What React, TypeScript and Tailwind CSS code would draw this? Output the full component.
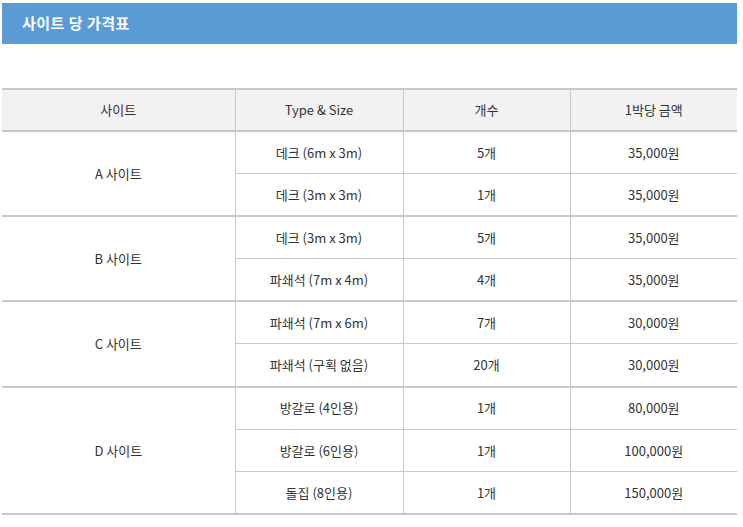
import React from "react";

const groups = [
  { site: "A 사이트", rows: [["데크 (6m x 3m)", "5개", "35,000원"], ["데크 (3m x 3m)", "1개", "35,000원"]] },
  { site: "B 사이트", rows: [["데크 (3m x 3m)", "5개", "35,000원"], ["파쇄석 (7m x 4m)", "4개", "35,000원"]] },
  { site: "C 사이트", rows: [["파쇄석 (7m x 6m)", "7개", "30,000원"], ["파쇄석 (구획 없음)", "20개", "30,000원"]] },
  {
    site: "D 사이트",
    rows: [["방갈로 (4인용)", "1개", "80,000원"], ["방갈로 (6인용)", "1개", "100,000원"], ["돌집 (8인용)", "1개", "150,000원"]],
  },
];

export default function App() {
  return (
    <div
      className="w-[743px] h-[527px] bg-white px-[2px] pt-[3px] text-[#333]"
      style={{ fontFamily: '"Noto Sans CJK KR", "Noto Sans", sans-serif' }}
    >
      <div className="w-[735px] h-[41px] bg-[#5b9bd5] flex items-center pl-[20px]">
        <span className="text-white font-bold text-[15px] tracking-[0.5px]">사이트 당 가격표</span>
      </div>
      <table className="mt-[44px] w-[735px] border-collapse text-[13px] table-fixed">
        <colgroup>
          <col className="w-[233px]" />
          <col className="w-[168px]" />
          <col className="w-[167px]" />
          <col className="w-[167px]" />
        </colgroup>
        <thead>
          <tr className="h-[42px] bg-[#f2f2f2]">
            <th className="font-normal border-t-2 border-b-2 border-[#c8c8c8]">사이트</th>
            <th className="font-normal border-t-2 border-b-2 border-l border-[#c8c8c8]">Type &amp; Size</th>
            <th className="font-normal border-t-2 border-b-2 border-l border-[#c8c8c8]">개수</th>
            <th className="font-normal border-t-2 border-b-2 border-l border-[#c8c8c8]">1박당 금액</th>
          </tr>
        </thead>
        <tbody>
          {groups.map((g) =>
            g.rows.map((r, i) => {
              const last = i === g.rows.length - 1;
              const bb = last ? "border-b-2 border-b-[#c8c8c8]" : "border-b border-b-[#c8c8c8]";
              return (
                <tr key={g.site + i} className="h-[42.6px]">
                  {i === 0 && (
                    <td rowSpan={g.rows.length} className="text-center border-b-2 border-b-[#c8c8c8]">
                      {g.site}
                    </td>
                  )}
                  <td className={`text-center border-l border-l-[#c8c8c8] ${bb}`}>{r[0]}</td>
                  <td className={`text-center border-l border-l-[#c8c8c8] ${bb}`}>{r[1]}</td>
                  <td className={`text-center border-l border-l-[#c8c8c8] ${bb}`}>{r[2]}</td>
                </tr>
              );
            })
          )}
        </tbody>
      </table>
    </div>
  );
}
